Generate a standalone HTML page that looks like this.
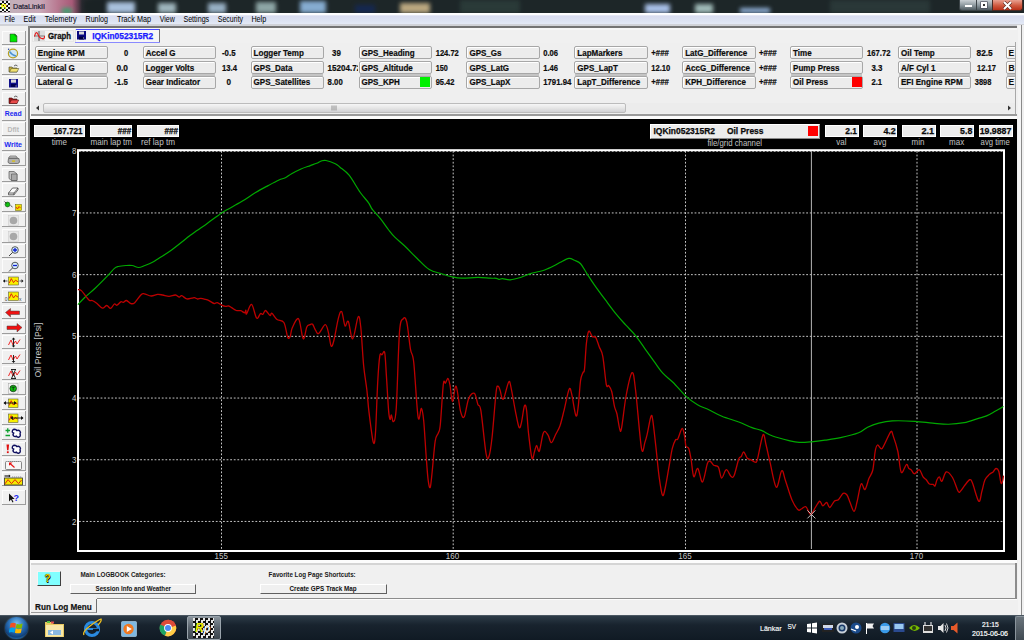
<!DOCTYPE html><html><head><meta charset="utf-8"><style>
html,body{margin:0;padding:0;}
body{width:1024px;height:640px;overflow:hidden;position:relative;background:#f0f0f0;font-family:"Liberation Sans",sans-serif;}
div{box-sizing:border-box;}
.t{position:absolute;white-space:nowrap;line-height:1;}
.cb{position:absolute;height:13px;width:73.4px;border:1px solid #a7a7a7;border-radius:2px;background:#ececec;box-shadow:inset 1px 1px 0 #fff;}
.cl{position:absolute;white-space:nowrap;line-height:1;font-weight:bold;font-size:8px;color:#1a1a1a;}
.v{position:absolute;white-space:nowrap;line-height:1;font-weight:bold;font-size:8px;color:#1a1a1a;}
.tb{position:absolute;left:2px;width:24px;height:15px;border-top:1px solid #fff;border-left:1px solid #fff;border-right:1px solid #a0a0a0;border-bottom:1px solid #a0a0a0;}
.hb{position:absolute;height:12px;background:#ececec;border:1px solid #fff;}
.hv{position:absolute;white-space:nowrap;line-height:1;font-weight:bold;font-size:8.4px;color:#111;text-align:right;}
.hl{position:absolute;white-space:nowrap;line-height:1;font-size:7.9px;color:#c8c8c8;text-align:center;}
.yl{position:absolute;white-space:nowrap;line-height:1;font-size:8.5px;color:#d0d0d0;}
</style></head><body>

<div style="position:absolute;left:0;top:0;width:1024px;height:13px;overflow:hidden;background:linear-gradient(90deg,#a8a0a8 0,#c4b0ba 12px,#c8a8b8 40px,#b87890 58px,#a85a78 72px,#2a2a30 82px,#1d2628 95px);">
<div style="position:absolute;left:62px;top:8px;width:10px;height:6px;background:#40a070;filter:blur(2px);"></div>
<div style="position:absolute;left:84px;top:0px;width:30px;height:13px;background:#1a2224;filter:blur(2px);"></div>
<div style="position:absolute;left:107px;top:2px;width:28px;height:11px;background:#a8c0dc;filter:blur(2px);"></div>
<div style="position:absolute;left:158px;top:3px;width:18px;height:10px;background:#9fb5bc;filter:blur(2px);"></div>
<div style="position:absolute;left:208px;top:3px;width:18px;height:10px;background:#98b0c4;filter:blur(2px);"></div>
<div style="position:absolute;left:256px;top:2px;width:20px;height:11px;background:#8ea6a6;filter:blur(2px);"></div>
<div style="position:absolute;left:300px;top:1px;width:26px;height:12px;background:#86acd0;filter:blur(2px);"></div>
<div style="position:absolute;left:355px;top:5px;width:20px;height:8px;background:#152850;filter:blur(2px);"></div>
<div style="position:absolute;left:400px;top:3px;width:30px;height:10px;background:#bba880;filter:blur(2px);"></div>
<div style="position:absolute;left:460px;top:0px;width:60px;height:13px;background:#2a3a38;filter:blur(2px);"></div>
<div style="position:absolute;left:645px;top:4px;width:25px;height:9px;background:#a8c0e8;filter:blur(2px);"></div>
<div style="position:absolute;left:695px;top:4px;width:18px;height:9px;background:#a0bab8;filter:blur(2px);"></div>
<div style="position:absolute;left:740px;top:8px;width:30px;height:5px;background:#90b0d8;filter:blur(2px);"></div>
<div style="position:absolute;left:830px;top:0px;width:100px;height:13px;background:#2a3838;filter:blur(2px);"></div>
</div>
<div style="position:absolute;left:0;top:1px;width:10px;height:11px;background:repeating-conic-gradient(#111 0 25%,#eee 0 50%) 0 0/4px 4px;"></div>
<div class="t" style="left:1px;top:2px;font:bold 8px 'Liberation Sans';color:#ff0;">R</div>

<div style="position:absolute;left:959px;top:0;width:34px;height:11px;background:linear-gradient(#c9d0d4,#8a969c 55%,#505c62);border:1px solid #3c4448;border-top:none;border-radius:0 0 0 3px;"></div>
<div style="position:absolute;left:976px;top:0;width:1px;height:11px;background:#3c4448;"></div>
<div style="position:absolute;left:965px;top:5px;width:7px;height:2px;background:#fff;"></div>
<div style="position:absolute;left:981px;top:2px;width:6px;height:6px;border:2px solid #fff;background:#333;box-shadow:0 0 0 0.6px #445;"></div>
<div style="position:absolute;left:992px;top:0;width:31px;height:11px;background:linear-gradient(#e8a090,#d05a40 55%,#b83018);border:1px solid #4a2a24;border-top:none;border-radius:0 0 3px 0;"></div>
<svg style="position:absolute;left:1002px;top:1px" width="11" height="9" viewBox="0 0 11 9"><path d="M2 1l7 7M9 1l-7 7" stroke="#5a2a20" stroke-width="3.2"/><path d="M2 1l7 7M9 1l-7 7" stroke="#fff" stroke-width="2"/></svg>
<div style="position:absolute;left:0;top:13px;width:1024px;height:13px;background:linear-gradient(#fdfdfe 0,#fdfdfe 1.5px,#d8dcef 3px,#dde3f2 8px,#e2e8f5 10.5px,#d0d2d8 11.5px,#d0d2d6 13px);"></div>
<div style="position:absolute;left:27.5px;top:26px;width:990px;height:2px;background:#737373;"></div>









<div style="position:absolute;left:1017px;top:25px;width:7px;height:590px;background:#f0f0f0;"></div>
<div style="position:absolute;left:1018px;top:26px;width:3px;height:589px;background:#f4f4f4;"></div>
<div style="position:absolute;left:1021px;top:25px;width:1px;height:590px;background:#8a8a8a;"></div>
<div style="position:absolute;left:0px;top:26px;width:27.5px;height:589px;background:#f0f0f0;"></div>
<div style="position:absolute;left:27.5px;top:26px;width:2px;height:589px;background:#858585;"></div>
<div style="position:absolute;left:2px;top:30.72px;width:24px;height:14px;border-right:1px solid #9c9c9c;border-bottom:1px solid #9c9c9c;box-shadow:inset 1px 1px 0 #fcfcfc;"></div>
<svg style="position:absolute;left:0;top:30.72px" width="28" height="15" viewBox="0 0 28 15"><path d="M10 3h5l2 2v6h-7z" fill="#00e600" stroke="#2a2a2a" stroke-width="0.5"/><path d="M15 3v2h2" fill="none" stroke="#2a2a2a" stroke-width="0.5"/></svg>
<div style="position:absolute;left:2px;top:45.94px;width:24px;height:14px;border-right:1px solid #9c9c9c;border-bottom:1px solid #9c9c9c;box-shadow:inset 1px 1px 0 #fcfcfc;"></div>
<svg style="position:absolute;left:0;top:45.94px" width="28" height="15" viewBox="0 0 28 15"><ellipse cx="13" cy="7.5" rx="4.6" ry="4.3" fill="#cfe6f5" stroke="#b8a020" stroke-width="1.2"/><path d="M9.5 5.5q3 4 6.5 4.5" stroke="#4a90d0" stroke-width="1.3" fill="none"/><circle cx="8.6" cy="3.3" r="0.7" fill="#2040a0"/></svg>
<div style="position:absolute;left:2px;top:61.16px;width:24px;height:14px;border-right:1px solid #9c9c9c;border-bottom:1px solid #9c9c9c;box-shadow:inset 1px 1px 0 #fcfcfc;"></div>
<svg style="position:absolute;left:0;top:61.16px" width="28" height="15" viewBox="0 0 28 15"><path d="M9 6h3l1 1h4v4h-8z" fill="#c8b040" stroke="#404020" stroke-width="0.6"/><path d="M9.5 11l1.8-3.5h7.5l-1.8 3.5z" fill="#f0e070" stroke="#404020" stroke-width="0.5"/><path d="M14 5q2-2 3.5 0" stroke="#222" stroke-width="0.7" fill="none"/></svg>
<div style="position:absolute;left:2px;top:76.38px;width:24px;height:14px;border-right:1px solid #9c9c9c;border-bottom:1px solid #9c9c9c;box-shadow:inset 1px 1px 0 #fcfcfc;"></div>
<svg style="position:absolute;left:0;top:76.38px" width="28" height="15" viewBox="0 0 28 15"><rect x="9" y="3" width="9" height="8.5" fill="#10108a"/><rect x="11" y="3.5" width="5" height="3.2" fill="#d8d8d8"/><rect x="11" y="8" width="5" height="3" fill="#000050"/><rect x="15.5" y="9.5" width="1" height="1" fill="#ccc"/></svg>
<div style="position:absolute;left:2px;top:91.60px;width:24px;height:14px;border-right:1px solid #9c9c9c;border-bottom:1px solid #9c9c9c;box-shadow:inset 1px 1px 0 #fcfcfc;"></div>
<svg style="position:absolute;left:0;top:91.60px" width="28" height="15" viewBox="0 0 28 15"><path d="M9 6h3l1 1h4v4.5h-8z" fill="#a01818" stroke="#401010" stroke-width="0.6"/><path d="M9.5 11.5l1.8-3.5h7.5l-1.8 3.5z" fill="#e84a4a" stroke="#401010" stroke-width="0.5"/><path d="M14 5q2-2 3.5 0" stroke="#222" stroke-width="0.7" fill="none"/></svg>
<div style="position:absolute;left:2px;top:106.82px;width:24px;height:14px;border-right:1px solid #9c9c9c;border-bottom:1px solid #9c9c9c;box-shadow:inset 1px 1px 0 #fcfcfc;"></div>
<svg style="position:absolute;left:0;top:106.82px" width="28" height="15" viewBox="0 0 28 15"><text x="13.2" y="9.2" text-anchor="middle" font-family="Liberation Sans" font-weight="bold" font-size="6.9" fill="#1a2af0">Read</text></svg>
<div style="position:absolute;left:2px;top:122.04px;width:24px;height:14px;border-right:1px solid #9c9c9c;border-bottom:1px solid #9c9c9c;box-shadow:inset 1px 1px 0 #fcfcfc;"></div>
<svg style="position:absolute;left:0;top:122.04px" width="28" height="15" viewBox="0 0 28 15"><text x="13.2" y="9.6" text-anchor="middle" font-family="Liberation Sans" font-weight="bold" font-size="6.9" fill="#b8b8b8">Dflt</text></svg>
<div style="position:absolute;left:2px;top:137.26px;width:24px;height:14px;border-right:1px solid #9c9c9c;border-bottom:1px solid #9c9c9c;box-shadow:inset 1px 1px 0 #fcfcfc;"></div>
<svg style="position:absolute;left:0;top:137.26px" width="28" height="15" viewBox="0 0 28 15"><text x="13.2" y="9.6" text-anchor="middle" font-family="Liberation Sans" font-weight="bold" font-size="7.2" fill="#1a2af0">Write</text></svg>
<div style="position:absolute;left:2px;top:152.48px;width:24px;height:14px;border-right:1px solid #9c9c9c;border-bottom:1px solid #9c9c9c;box-shadow:inset 1px 1px 0 #fcfcfc;"></div>
<svg style="position:absolute;left:0;top:152.48px" width="28" height="15" viewBox="0 0 28 15"><path d="M10 4h6l1.5 2h-9z" fill="#c8c8c8" stroke="#505050" stroke-width="0.6"/><path d="M8.5 6.5h10.5l0.5 3.5q-0.5 1.5-2 1.5h-7.5q-1.5 0-2-1.5z" fill="#b0b0b0" stroke="#404040" stroke-width="0.6"/><rect x="12" y="8.5" width="3" height="1.2" fill="#e0c000"/></svg>
<div style="position:absolute;left:2px;top:167.70px;width:24px;height:14px;border-right:1px solid #9c9c9c;border-bottom:1px solid #9c9c9c;box-shadow:inset 1px 1px 0 #fcfcfc;"></div>
<svg style="position:absolute;left:0;top:167.70px" width="28" height="15" viewBox="0 0 28 15"><path d="M9 3.5h5l3 2.5v6.5h-5.5l-2.5-2z" fill="#c0c0c0" stroke="#404040" stroke-width="0.6"/><path d="M11.5 6h5.5v6.5h-5.5z" fill="#a8a8a8" stroke="#404040" stroke-width="0.5"/></svg>
<div style="position:absolute;left:2px;top:182.92px;width:24px;height:14px;border-right:1px solid #9c9c9c;border-bottom:1px solid #9c9c9c;box-shadow:inset 1px 1px 0 #fcfcfc;"></div>
<svg style="position:absolute;left:0;top:182.92px" width="28" height="15" viewBox="0 0 28 15"><path d="M8.5 10l4-5h5.5l-4 5z" fill="#fafafa" stroke="#303030" stroke-width="0.7"/><path d="M8.5 10v1.8h5.5l4-5v-1.8M14 10v1.8" fill="none" stroke="#303030" stroke-width="0.7"/></svg>
<div style="position:absolute;left:2px;top:198.14px;width:24px;height:14px;border-right:1px solid #9c9c9c;border-bottom:1px solid #9c9c9c;box-shadow:inset 1px 1px 0 #fcfcfc;"></div>
<svg style="position:absolute;left:0;top:198.14px" width="28" height="15" viewBox="0 0 28 15"><circle cx="7.5" cy="6.5" r="2.4" fill="#10c010" stroke="#104010" stroke-width="0.6"/><path d="M4.5 3.5l2 2M10.5 7.5l2 1.5" stroke="#111" stroke-width="0.7"/><rect x="15.5" y="6.5" width="6" height="6" fill="#f0e000" stroke="#606000" stroke-width="0.5"/><path d="M16 9l1.5 2 1.5-2.5 1.5 1.5" stroke="#e01010" stroke-width="0.8" fill="none"/></svg>
<div style="position:absolute;left:2px;top:213.36px;width:24px;height:14px;border-right:1px solid #9c9c9c;border-bottom:1px solid #9c9c9c;box-shadow:inset 1px 1px 0 #fcfcfc;"></div>
<svg style="position:absolute;left:0;top:213.36px" width="28" height="15" viewBox="0 0 28 15"><rect x="8.5" y="2.5" width="10" height="10" fill="#e8e8e8" stroke="#c8c8c8" stroke-width="0.5"/><circle cx="13.5" cy="7.5" r="3.8" fill="#a8a8a8"/></svg>
<div style="position:absolute;left:2px;top:228.58px;width:24px;height:14px;border-right:1px solid #9c9c9c;border-bottom:1px solid #9c9c9c;box-shadow:inset 1px 1px 0 #fcfcfc;"></div>
<svg style="position:absolute;left:0;top:228.58px" width="28" height="15" viewBox="0 0 28 15"><rect x="8.5" y="2.5" width="10" height="10" fill="#e8e8e8" stroke="#c8c8c8" stroke-width="0.5"/><circle cx="13.5" cy="7.5" r="3.8" fill="#a8a8a8"/></svg>
<div style="position:absolute;left:2px;top:243.80px;width:24px;height:14px;border-right:1px solid #9c9c9c;border-bottom:1px solid #9c9c9c;box-shadow:inset 1px 1px 0 #fcfcfc;"></div>
<svg style="position:absolute;left:0;top:243.80px" width="28" height="15" viewBox="0 0 28 15"><circle cx="15" cy="6" r="3.3" fill="#d8f0ff" stroke="#303030" stroke-width="0.8"/><path d="M13 6h4M15 4v4" stroke="#1020d0" stroke-width="1.3"/><path d="M12.5 8.5l-3.5 3.5" stroke="#303030" stroke-width="0.9"/></svg>
<div style="position:absolute;left:2px;top:259.02px;width:24px;height:14px;border-right:1px solid #9c9c9c;border-bottom:1px solid #9c9c9c;box-shadow:inset 1px 1px 0 #fcfcfc;"></div>
<svg style="position:absolute;left:0;top:259.02px" width="28" height="15" viewBox="0 0 28 15"><circle cx="15" cy="6.5" r="3.3" fill="#d8f0ff" stroke="#303030" stroke-width="0.8"/><path d="M13 6.5h4" stroke="#1020d0" stroke-width="1.3"/><path d="M12.5 9l-3.5 3.5" stroke="#303030" stroke-width="0.9"/></svg>
<div style="position:absolute;left:2px;top:274.24px;width:24px;height:14px;border-right:1px solid #9c9c9c;border-bottom:1px solid #9c9c9c;box-shadow:inset 1px 1px 0 #fcfcfc;"></div>
<svg style="position:absolute;left:0;top:274.24px" width="28" height="15" viewBox="0 0 28 15"><rect x="8.5" y="3" width="10" height="8" fill="#f8f000" stroke="#606040" stroke-width="0.6"/><path d="M9.3 9.0l2.0 -4.4 2.2 4.0 2.0 -2.4 2.5 1.6" stroke="#e01010" stroke-width="0.9" fill="none"/><path d="M3.5 7h4M21.5 7h-2" stroke="#111" stroke-width="0.7"/><path d="M3 7l2-1.7v3.4zM23.5 7l-2-1.7v3.4z" fill="#111"/></svg>
<div style="position:absolute;left:2px;top:289.46px;width:24px;height:14px;border-right:1px solid #9c9c9c;border-bottom:1px solid #9c9c9c;box-shadow:inset 1px 1px 0 #fcfcfc;"></div>
<svg style="position:absolute;left:0;top:289.46px" width="28" height="15" viewBox="0 0 28 15"><rect x="8.5" y="3" width="10" height="8.5" fill="#f8f000" stroke="#606040" stroke-width="0.6"/><path d="M9.3 9.375l2.0 -4.675000000000001 2.2 4.25 2.0 -2.55 2.5 1.7000000000000002" stroke="#e01010" stroke-width="0.9" fill="none"/><text x="4.8" y="12.3" font-family="Liberation Sans" font-size="5" fill="#444">0</text><text x="19" y="12.3" font-family="Liberation Sans" font-size="5" fill="#444">x</text></svg>
<div style="position:absolute;left:2px;top:304.68px;width:24px;height:14px;border-right:1px solid #9c9c9c;border-bottom:1px solid #9c9c9c;box-shadow:inset 1px 1px 0 #fcfcfc;"></div>
<svg style="position:absolute;left:0;top:304.68px" width="28" height="15" viewBox="0 0 28 15"><path d="M5.5 7.5l5-4v2.5h9v3.5h-9v2.5z" fill="#ee1010" stroke="#404040" stroke-width="0.5"/></svg>
<div style="position:absolute;left:2px;top:319.90px;width:24px;height:14px;border-right:1px solid #9c9c9c;border-bottom:1px solid #9c9c9c;box-shadow:inset 1px 1px 0 #fcfcfc;"></div>
<svg style="position:absolute;left:0;top:319.90px" width="28" height="15" viewBox="0 0 28 15"><path d="M22 7.5l-5-4v2.5h-10v3.5h10v2.5z" fill="#ee1010" stroke="#404040" stroke-width="0.5"/></svg>
<div style="position:absolute;left:2px;top:335.12px;width:24px;height:14px;border-right:1px solid #9c9c9c;border-bottom:1px solid #9c9c9c;box-shadow:inset 1px 1px 0 #fcfcfc;"></div>
<svg style="position:absolute;left:0;top:335.12px" width="28" height="15" viewBox="0 0 28 15"><path d="M8.5 10l2.5-5 2 5 2.5-4 1.5 3 3-4.5" stroke="#ee1010" stroke-width="0.9" fill="none"/><path d="M13.5 3.5v8" stroke="#111" stroke-width="0.9"/><path d="M13.5 2.5l-1.8 2h3.6zM13.5 12.5l-1.8-2h3.6z" fill="#111"/></svg>
<div style="position:absolute;left:2px;top:350.34px;width:24px;height:14px;border-right:1px solid #9c9c9c;border-bottom:1px solid #9c9c9c;box-shadow:inset 1px 1px 0 #fcfcfc;"></div>
<svg style="position:absolute;left:0;top:350.34px" width="28" height="15" viewBox="0 0 28 15"><path d="M8.5 10l2.5-5 2 5 2.5-4 1.5 3 3-4.5" stroke="#ee1010" stroke-width="0.9" fill="none"/><path d="M13.5 5v7" stroke="#111" stroke-width="0.9"/><path d="M13.5 13l-1.8-2h3.6z" fill="#111"/></svg>
<div style="position:absolute;left:2px;top:365.56px;width:24px;height:14px;border-right:1px solid #9c9c9c;border-bottom:1px solid #9c9c9c;box-shadow:inset 1px 1px 0 #fcfcfc;"></div>
<svg style="position:absolute;left:0;top:365.56px" width="28" height="15" viewBox="0 0 28 15"><path d="M8.5 10l2.5-5 2 5 2.5-4 1.5 3 3-4.5" stroke="#ee1010" stroke-width="0.9" fill="none"/><path d="M11.5 3.5l4 9M15.5 3.5l-4 9M11 3.5h5M11 12.5h5" stroke="#111" stroke-width="0.9"/></svg>
<div style="position:absolute;left:2px;top:380.78px;width:24px;height:14px;border-right:1px solid #9c9c9c;border-bottom:1px solid #9c9c9c;box-shadow:inset 1px 1px 0 #fcfcfc;"></div>
<svg style="position:absolute;left:0;top:380.78px" width="28" height="15" viewBox="0 0 28 15"><rect x="8.5" y="2.5" width="9.5" height="10" fill="#f4f4f4" stroke="#a0a0a0" stroke-width="0.5"/><circle cx="13.2" cy="7.5" r="3.3" fill="#10c010" stroke="#102010" stroke-width="0.7"/><path d="M11.6 6.2h3.2M13.2 6.2v3.2" stroke="#102010" stroke-width="0.8"/></svg>
<div style="position:absolute;left:2px;top:396.00px;width:24px;height:14px;border-right:1px solid #9c9c9c;border-bottom:1px solid #9c9c9c;box-shadow:inset 1px 1px 0 #fcfcfc;"></div>
<svg style="position:absolute;left:0;top:396.00px" width="28" height="15" viewBox="0 0 28 15"><rect x="8.5" y="3" width="9.5" height="8.5" fill="#f8f000" stroke="#606040" stroke-width="0.6"/><path d="M9.3 9.375l1.9000000000000001 -4.675000000000001 2.09 4.25 1.9000000000000001 -2.55 2.375 1.7000000000000002" stroke="#e01010" stroke-width="0.9" fill="none"/><path d="M4 7h12" stroke="#111" stroke-width="0.9"/><path d="M3.5 7l2.5-2v4zM16.5 7l-2.5-2v4z" fill="#111"/></svg>
<div style="position:absolute;left:2px;top:411.22px;width:24px;height:14px;border-right:1px solid #9c9c9c;border-bottom:1px solid #9c9c9c;box-shadow:inset 1px 1px 0 #fcfcfc;"></div>
<svg style="position:absolute;left:0;top:411.22px" width="28" height="15" viewBox="0 0 28 15"><rect x="8.5" y="3" width="9.5" height="8.5" fill="#f8f000" stroke="#606040" stroke-width="0.6"/><path d="M9.3 9.375l1.9000000000000001 -4.675000000000001 2.09 4.25 1.9000000000000001 -2.55 2.375 1.7000000000000002" stroke="#e01010" stroke-width="0.9" fill="none"/><path d="M11 7h12" stroke="#111" stroke-width="0.9"/><path d="M10.5 7l2.5-2v4zM23.5 7l-2.5-2v4z" fill="#111"/></svg>
<div style="position:absolute;left:2px;top:426.44px;width:24px;height:14px;border-right:1px solid #9c9c9c;border-bottom:1px solid #9c9c9c;box-shadow:inset 1px 1px 0 #fcfcfc;"></div>
<svg style="position:absolute;left:0;top:426.44px" width="28" height="15" viewBox="0 0 28 15"><path d="M12.3 6.2q-0.3-2.8 2.3-2.9q1.6 0 2.2 1.3q1.6-1 3 0.3q1.3 1.3 0.2 3q1 2.2-1 3.1q-1.7 0.6-2.6-0.9q-1.5 0.9-2.7-0.2q-1.4-1.5 0.1-2.9q-0.9 0-1.5-0.8z" fill="#fff" stroke="#101060" stroke-width="1.4" stroke-linejoin="round"/><path d="M5.5 4.5h4.5M7.75 2.3v4.4M5.5 9.5h4.5" stroke="#10a030" stroke-width="1.3"/></svg>
<div style="position:absolute;left:2px;top:441.66px;width:24px;height:14px;border-right:1px solid #9c9c9c;border-bottom:1px solid #9c9c9c;box-shadow:inset 1px 1px 0 #fcfcfc;"></div>
<svg style="position:absolute;left:0;top:441.66px" width="28" height="15" viewBox="0 0 28 15"><path d="M12.3 6.2q-0.3-2.8 2.3-2.9q1.6 0 2.2 1.3q1.6-1 3 0.3q1.3 1.3 0.2 3q1 2.2-1 3.1q-1.7 0.6-2.6-0.9q-1.5 0.9-2.7-0.2q-1.4-1.5 0.1-2.9q-0.9 0-1.5-0.8z" fill="#fff" stroke="#101060" stroke-width="1.4" stroke-linejoin="round"/><path d="M6.5 2.5h2.6l-0.6 5.8h-1.4z" fill="#e01010"/><rect x="6.9" y="9.3" width="1.8" height="1.8" fill="#e01010"/></svg>
<div style="position:absolute;left:2px;top:456.88px;width:24px;height:14px;border-right:1px solid #9c9c9c;border-bottom:1px solid #9c9c9c;box-shadow:inset 1px 1px 0 #fcfcfc;"></div>
<svg style="position:absolute;left:0;top:456.88px" width="28" height="15" viewBox="0 0 28 15"><rect x="5.5" y="4.5" width="16" height="8" rx="1" fill="#f6f6f6" stroke="#6a6a6a" stroke-width="0.8"/><path d="M7 4.5h13" stroke="#b0b0b0" stroke-width="1" stroke-dasharray="1 1"/><path d="M14.5 10.5l-4.5-4" stroke="#e81010" stroke-width="1.2"/><path d="M9 5.5h3.5l-3.5 3.3z" fill="#e81010"/></svg>
<div style="position:absolute;left:2px;top:472.10px;width:24px;height:14px;border-right:1px solid #9c9c9c;border-bottom:1px solid #9c9c9c;box-shadow:inset 1px 1px 0 #fcfcfc;"></div>
<svg style="position:absolute;left:0;top:472.10px" width="28" height="15" viewBox="0 0 28 15"><rect x="4.5" y="6" width="18" height="7" fill="#f4e800" stroke="#303030" stroke-width="0.8"/><path d="M5 11.8l3-4.2 3.5 4 3.5-4 3.5 4 3-3.5" stroke="#e01010" stroke-width="0.9" fill="none"/><path d="M4.5 4h5" stroke="#111" stroke-width="1.1"/><path d="M10.5 4l-1.6-1.4v2.8z" fill="#111"/><path d="M12 5h10" stroke="#777" stroke-width="0.8" stroke-dasharray="1.2 0.8"/></svg>
<div style="position:absolute;left:2px;top:490.4px;width:24px;height:15px;border-right:1px solid #9c9c9c;border-bottom:1px solid #9c9c9c;box-shadow:inset 1px 1px 0 #fcfcfc;"></div>
<svg style="position:absolute;left:0;top:490.4px" width="28" height="15" viewBox="0 0 28 15"><path d="M9 3.5v8l2-2 1.5 3 1-0.5-1.5-3h2.7z" fill="#111"/><text x="13.5" y="10.5" font-family="Liberation Sans" font-weight="bold" font-size="9" fill="#1a2af0">?</text></svg>
<div style="position:absolute;left:29.5px;top:28px;width:987.5px;height:88px;background:#f0f0f0;"></div>
<div style="position:absolute;left:29.5px;top:28px;width:987.5px;height:2px;background:#f6f6f6;"></div>
<div style="position:absolute;left:29.5px;top:28px;width:1px;height:88px;background:#fafafa;"></div>
<div style="position:absolute;left:32.4px;top:30px;width:42px;height:11.6px;background:#f3f3f3;border:1px solid #e6e6e6;"></div>
<svg style="position:absolute;left:34px;top:31px" width="11" height="10" viewBox="0 0 11 10"><rect x="0" y="0" width="11" height="10" fill="#dcdcdc"/><rect x="4" y="0" width="2" height="10" fill="#9a9a9a"/><rect x="0" y="4.5" width="11" height="1" fill="#7a7a7a"/><path d="M0.5 5.5Q2 -1 4 3.5T8.5 7.5Q10 9 10.7 5" stroke="#e81818" stroke-width="1.1" fill="none"/></svg>

<div style="position:absolute;left:74.5px;top:29px;width:85px;height:14px;background:#f6f6f6;border-left:1px solid #e0e0e0;border-right:1px solid #707070;"></div>
<div style="position:absolute;left:75.5px;top:29.2px;width:83px;height:1px;background:#4a4aff;"></div>
<div style="position:absolute;left:74.5px;top:42px;width:85px;height:1.5px;background:#8a8aff;"></div>
<svg style="position:absolute;left:77px;top:30.5px" width="9" height="9" viewBox="0 0 9 9"><rect x="0" y="0" width="9" height="8.5" fill="#0a0a80"/><rect x="2" y="0.5" width="5" height="3" fill="#d8d8d8"/><rect x="2" y="5.5" width="5" height="3" fill="#000040"/><rect x="6" y="6.5" width="1" height="1" fill="#bbb"/></svg>

<div style="position:absolute;left:31px;top:43px;width:985px;height:71px;background:#efefef;"></div>
<div style="position:absolute;left:1015px;top:42px;width:1px;height:72px;background:#a8a8a8;"></div>
<div style="position:absolute;left:31px;top:43px;width:984px;height:60px;overflow:hidden;">
<div class="cb" style="left:3.80px;top:3.30px;"></div>
<div class="cb" style="left:3.80px;top:18.20px;"></div>
<div style="position:absolute;left:4.80px;top:30.70px;width:71.4px;height:2px;background:#c4c4c4;"></div>
<div class="cb" style="left:3.80px;top:33.20px;"></div>
<div class="cb" style="left:111.70px;top:3.30px;"></div>
<div class="cb" style="left:111.70px;top:18.20px;"></div>
<div style="position:absolute;left:112.70px;top:30.70px;width:71.4px;height:2px;background:#c4c4c4;"></div>
<div class="cb" style="left:111.70px;top:33.20px;"></div>
<div class="cb" style="left:219.60px;top:3.30px;"></div>
<div class="cb" style="left:219.60px;top:18.20px;"></div>
<div style="position:absolute;left:220.60px;top:30.70px;width:71.4px;height:2px;background:#c4c4c4;"></div>
<div class="cb" style="left:219.60px;top:33.20px;"></div>
<div class="cb" style="left:327.50px;top:3.30px;"></div>
<div class="cb" style="left:327.50px;top:18.20px;"></div>
<div style="position:absolute;left:328.50px;top:30.70px;width:71.4px;height:2px;background:#c4c4c4;"></div>
<div class="cb" style="left:327.50px;top:33.20px;"></div>
<div class="cb" style="left:435.40px;top:3.30px;"></div>
<div class="cb" style="left:435.40px;top:18.20px;"></div>
<div style="position:absolute;left:436.40px;top:30.70px;width:71.4px;height:2px;background:#c4c4c4;"></div>
<div class="cb" style="left:435.40px;top:33.20px;"></div>
<div class="cb" style="left:543.30px;top:3.30px;"></div>
<div class="cb" style="left:543.30px;top:18.20px;"></div>
<div style="position:absolute;left:544.30px;top:30.70px;width:71.4px;height:2px;background:#c4c4c4;"></div>
<div class="cb" style="left:543.30px;top:33.20px;"></div>
<div class="cb" style="left:651.20px;top:3.30px;"></div>
<div class="cb" style="left:651.20px;top:18.20px;"></div>
<div style="position:absolute;left:652.20px;top:30.70px;width:71.4px;height:2px;background:#c4c4c4;"></div>
<div class="cb" style="left:651.20px;top:33.20px;"></div>
<div class="cb" style="left:759.10px;top:3.30px;"></div>
<div class="cb" style="left:759.10px;top:18.20px;"></div>
<div style="position:absolute;left:760.10px;top:30.70px;width:71.4px;height:2px;background:#c4c4c4;"></div>
<div class="cb" style="left:759.10px;top:33.20px;"></div>
<div class="cb" style="left:867.00px;top:3.30px;"></div>
<div class="cb" style="left:867.00px;top:18.20px;"></div>
<div style="position:absolute;left:868.00px;top:30.70px;width:71.4px;height:2px;background:#c4c4c4;"></div>
<div class="cb" style="left:867.00px;top:33.20px;"></div>
<div class="cb" style="left:974.90px;top:3.30px;"></div>
<div class="cb" style="left:974.90px;top:18.20px;"></div>
<div style="position:absolute;left:975.90px;top:30.70px;width:71.4px;height:2px;background:#c4c4c4;"></div>
<div class="cb" style="left:974.90px;top:33.20px;"></div>
<div style="position:absolute;left:389.3px;top:34px;width:10.2px;height:10.2px;background:#00f000;"></div>
<div style="position:absolute;left:821px;top:34px;width:10.2px;height:10.2px;background:#ff0000;"></div>
</div>






















































<div style="position:absolute;left:1005px;top:43px;width:10px;height:60px;overflow:hidden;">
<div class="t" style="left:3.5px;top:5.90px;font-size:8.5px;font-weight:bold;color:#0c0c0c;">E</div>
<div class="t" style="left:3.5px;top:20.50px;font-size:8.5px;font-weight:bold;color:#0c0c0c;">B</div>
<div class="t" style="left:3.5px;top:35.10px;font-size:8.5px;font-weight:bold;color:#0c0c0c;">E</div>
</div>
<div style="position:absolute;left:31px;top:103px;width:984px;height:10px;background:#ececec;"></div>
<svg style="position:absolute;left:35px;top:105px" width="5" height="6" viewBox="0 0 5 6"><path d="M4 0.5L1 3l3 2.5z" fill="#333"/></svg>
<svg style="position:absolute;left:1007px;top:105px" width="5" height="6" viewBox="0 0 5 6"><path d="M1 0.5L4 3l-3 2.5z" fill="#333"/></svg>
<div style="position:absolute;left:43px;top:103.3px;width:582.5px;height:9.3px;background:linear-gradient(#f6f6f6,#e6e6e6 50%,#d0d0d4);border:1px solid #bcbcbc;border-radius:2px;"></div>
<svg style="position:absolute;left:331px;top:105px" width="6" height="6" viewBox="0 0 6 6"><path d="M1 0.5v5M3 0.5v5M5 0.5v5" stroke="#8a8a8a" stroke-width="0.9"/></svg>
<div style="position:absolute;left:31px;top:114px;width:986px;height:1.5px;background:#9a9a9a;"></div>
<div style="position:absolute;left:30px;top:116px;width:987px;height:3px;background:#fbfbfb;"></div>
<div style="position:absolute;left:30px;top:119px;width:987px;height:441px;background:#000;"></div>
<div class="hb" style="left:34.00px;top:125px;width:51.00px;"></div>
<div class="hb" style="left:89.70px;top:125px;width:42.70px;"></div>
<div class="hb" style="left:136.60px;top:125px;width:42.70px;"></div>






<div style="position:absolute;left:649.8px;top:124px;width:170.5px;height:14.6px;background:#ececec;border-top:1px solid #fff;border-left:1px solid #fff;border-right:1.5px solid #8a8a8a;border-bottom:1.5px solid #8a8a8a;"></div>


<div style="position:absolute;left:808px;top:125.8px;width:10px;height:10.7px;background:#ff0000;"></div>

<div class="hb" style="left:824.80px;top:125px;width:34.00px;"></div>


<div class="hb" style="left:863.25px;top:125px;width:34.00px;"></div>


<div class="hb" style="left:901.70px;top:125px;width:34.00px;"></div>


<div class="hb" style="left:940.15px;top:125px;width:34.00px;"></div>


<div class="hb" style="left:978.60px;top:125px;width:34.00px;"></div>


<svg style="position:absolute;left:0;top:0" width="1024" height="640" viewBox="0 0 1024 640">
<line x1="79" y1="151.25" x2="1003" y2="151.25" stroke="#c4c4c4" stroke-width="1" stroke-dasharray="1.8 1.8"/>
<line x1="79" y1="212.95" x2="1003" y2="212.95" stroke="#c4c4c4" stroke-width="1" stroke-dasharray="1.8 1.8"/>
<line x1="79" y1="274.65" x2="1003" y2="274.65" stroke="#c4c4c4" stroke-width="1" stroke-dasharray="1.8 1.8"/>
<line x1="79" y1="336.35" x2="1003" y2="336.35" stroke="#c4c4c4" stroke-width="1" stroke-dasharray="1.8 1.8"/>
<line x1="79" y1="398.05" x2="1003" y2="398.05" stroke="#c4c4c4" stroke-width="1" stroke-dasharray="1.8 1.8"/>
<line x1="79" y1="459.75" x2="1003" y2="459.75" stroke="#c4c4c4" stroke-width="1" stroke-dasharray="1.8 1.8"/>
<line x1="79" y1="521.45" x2="1003" y2="521.45" stroke="#c4c4c4" stroke-width="1" stroke-dasharray="1.8 1.8"/>
<line x1="221.5" y1="151" x2="221.5" y2="549" stroke="#c4c4c4" stroke-width="1" stroke-dasharray="1.8 1.8"/>
<line x1="453.2" y1="151" x2="453.2" y2="549" stroke="#c4c4c4" stroke-width="1" stroke-dasharray="1.8 1.8"/>
<line x1="685.5" y1="151" x2="685.5" y2="549" stroke="#c4c4c4" stroke-width="1" stroke-dasharray="1.8 1.8"/>
<line x1="917" y1="151" x2="917" y2="549" stroke="#c4c4c4" stroke-width="1" stroke-dasharray="1.8 1.8"/>
<rect x="78" y="150.2" width="926" height="400.8" fill="none" stroke="#fff" stroke-width="2"/>
<line x1="811.4" y1="151" x2="811.4" y2="549" stroke="#b4b4b4" stroke-width="1"/>
<path d="M77.90 304.60 C79.12 303.33 82.28 299.77 85.20 297.00 C88.12 294.23 91.60 291.60 95.40 288.00 C99.20 284.40 104.83 278.67 108.00 275.40 C111.17 272.13 112.70 269.88 114.40 268.40 C116.10 266.92 116.28 266.98 118.20 266.50 C120.12 266.02 123.57 265.67 125.90 265.50 C128.23 265.33 130.08 265.17 132.20 265.50 C134.32 265.83 136.48 267.50 138.60 267.50 C140.72 267.50 142.58 266.37 144.90 265.50 C147.22 264.63 150.17 263.50 152.50 262.30 C154.83 261.10 155.72 260.35 158.90 258.30 C162.08 256.25 166.42 253.78 171.60 250.00 C176.78 246.22 185.77 238.85 190.00 235.60 C194.23 232.35 194.13 232.53 197.00 230.50 C199.87 228.47 203.16 226.27 207.20 223.40 C211.24 220.53 217.87 215.63 221.25 213.30 C224.63 210.97 224.11 211.35 227.50 209.40 C230.89 207.45 236.92 204.42 241.60 201.60 C246.28 198.78 251.18 195.17 255.60 192.50 C260.02 189.83 264.20 187.68 268.10 185.60 C272.00 183.52 276.13 181.30 279.00 180.00 C281.87 178.70 283.20 178.84 285.30 177.80 C287.40 176.76 288.98 175.22 291.60 173.75 C294.22 172.28 297.88 170.36 301.00 169.00 C304.12 167.64 307.70 166.55 310.30 165.60 C312.90 164.65 314.78 164.07 316.60 163.30 C318.43 162.53 319.68 161.47 321.25 161.00 C322.82 160.53 323.66 160.04 326.00 160.50 C328.34 160.96 332.97 162.63 335.30 163.75 C337.63 164.87 337.70 165.29 340.00 167.20 C342.30 169.11 345.72 170.98 349.10 175.20 C352.48 179.42 357.08 187.93 360.30 192.50 C363.52 197.07 366.37 199.73 368.40 202.60 C370.43 205.47 370.47 206.98 372.50 209.70 C374.53 212.42 377.90 215.52 380.60 218.90 C383.30 222.28 386.33 226.95 388.70 230.00 C391.07 233.05 392.08 234.48 394.80 237.20 C397.52 239.92 401.27 242.75 405.00 246.30 C408.73 249.85 413.15 254.62 417.20 258.50 C421.25 262.38 425.25 267.07 429.30 269.60 C433.35 272.13 437.77 272.51 441.50 273.70 C445.23 274.89 448.32 276.00 451.70 276.75 C455.08 277.50 457.42 278.09 461.80 278.20 C466.18 278.31 473.26 277.40 478.00 277.40 C482.74 277.40 487.21 278.05 490.25 278.20 C493.29 278.35 494.73 278.10 496.25 278.30 C497.77 278.50 498.36 279.35 499.40 279.40 C500.44 279.45 500.68 278.53 502.50 278.60 C504.32 278.67 507.18 280.03 510.30 279.80 C513.42 279.57 517.87 278.23 521.25 277.20 C524.63 276.17 527.99 274.47 530.60 273.60 C533.21 272.73 534.55 272.60 536.90 272.00 C539.25 271.40 541.85 271.03 544.70 270.00 C547.55 268.97 551.40 267.08 554.00 265.80 C556.60 264.52 557.82 263.53 560.30 262.30 C562.78 261.07 566.55 258.73 568.90 258.40 C571.25 258.07 572.45 259.41 574.40 260.30 C576.35 261.19 578.52 261.53 580.60 263.75 C582.68 265.97 584.55 270.01 586.90 273.60 C589.25 277.19 591.58 280.87 594.70 285.30 C597.82 289.73 601.95 295.30 605.60 300.20 C609.25 305.10 613.22 310.53 616.60 314.70 C619.98 318.87 622.73 321.72 625.90 325.20 C629.07 328.68 632.42 331.67 635.60 335.60 C638.78 339.53 641.87 344.42 645.00 348.80 C648.13 353.18 651.43 357.83 654.40 361.90 C657.37 365.97 659.67 369.77 662.80 373.20 C665.93 376.63 669.28 378.60 673.20 382.50 C677.12 386.40 682.25 392.90 686.30 396.60 C690.35 400.30 693.75 402.52 697.50 404.70 C701.25 406.88 704.73 407.77 708.80 409.70 C712.87 411.63 716.90 414.25 721.90 416.30 C726.90 418.35 733.78 420.12 738.80 422.00 C743.82 423.88 748.25 426.20 752.00 427.60 C755.75 429.00 757.87 429.00 761.30 430.40 C764.73 431.80 767.98 434.30 772.60 436.00 C777.22 437.70 784.58 439.53 789.00 440.60 C793.42 441.67 795.37 442.20 799.10 442.40 C802.83 442.60 807.08 442.17 811.40 441.80 C815.72 441.43 820.13 440.88 825.00 440.20 C829.87 439.52 835.00 438.93 840.60 437.70 C846.20 436.47 854.10 434.55 858.60 432.80 C863.10 431.05 864.23 428.82 867.60 427.20 C870.97 425.58 874.68 424.15 878.80 423.10 C882.92 422.05 886.30 421.20 892.30 420.90 C898.30 420.60 908.07 420.93 914.80 421.30 C921.53 421.67 927.08 422.61 932.70 423.10 C938.32 423.59 943.25 424.32 948.50 424.25 C953.75 424.18 959.33 423.64 964.20 422.70 C969.07 421.76 973.97 419.73 977.70 418.60 C981.43 417.47 983.62 417.17 986.60 415.90 C989.58 414.63 992.78 412.57 995.60 411.00 C998.42 409.43 1002.18 407.25 1003.50 406.50" fill="none" stroke="#00a800" stroke-width="1.2" stroke-linejoin="round"/>
<path d="M77.90 289.60 C78.48 289.77 79.55 288.87 81.40 290.60 C83.25 292.33 87.20 298.35 89.00 300.00 C90.80 301.65 90.92 299.95 92.20 300.50 C93.48 301.05 95.00 302.03 96.70 303.30 C98.40 304.57 100.72 307.73 102.40 308.10 C104.08 308.47 105.43 305.45 106.80 305.50 C108.17 305.55 109.33 308.65 110.60 308.40 C111.87 308.15 113.33 304.53 114.40 304.00 C115.47 303.47 115.93 305.57 117.00 305.20 C118.07 304.83 119.75 302.28 120.80 301.80 C121.85 301.32 122.35 302.52 123.30 302.30 C124.25 302.08 125.23 300.28 126.50 300.50 C127.77 300.72 129.53 303.23 130.90 303.60 C132.27 303.97 133.00 304.18 134.70 302.70 C136.40 301.22 139.50 296.18 141.10 294.70 C142.70 293.22 142.62 293.58 144.30 293.80 C145.98 294.02 148.98 295.90 151.20 296.00 C153.42 296.10 155.68 294.57 157.60 294.40 C159.52 294.23 160.80 294.68 162.70 295.00 C164.60 295.32 166.88 296.30 169.00 296.30 C171.12 296.30 173.70 294.85 175.40 295.00 C177.10 295.15 178.15 297.08 179.20 297.20 C180.25 297.32 180.43 295.42 181.70 295.70 C182.97 295.98 185.10 298.48 186.80 298.90 C188.50 299.32 190.63 298.42 191.90 298.20 C193.17 297.98 193.45 297.47 194.40 297.60 C195.35 297.73 196.53 298.87 197.60 299.00 C198.67 299.13 199.53 298.35 200.80 298.40 C202.07 298.45 203.83 298.93 205.20 299.30 C206.57 299.67 207.52 299.90 209.00 300.60 C210.48 301.30 212.72 303.17 214.10 303.50 C215.48 303.83 216.03 302.33 217.30 302.60 C218.57 302.87 220.33 304.47 221.70 305.10 C223.07 305.73 224.33 306.25 225.50 306.40 C226.67 306.55 227.63 305.75 228.70 306.00 C229.77 306.25 230.63 307.15 231.90 307.90 C233.17 308.65 234.82 310.03 236.30 310.50 C237.78 310.97 239.42 310.32 240.80 310.70 C242.18 311.07 243.75 312.83 244.60 312.75 C245.45 312.67 245.58 309.99 245.90 310.20 C246.22 310.41 245.55 314.97 246.50 314.00 C247.45 313.03 249.92 303.72 251.60 304.40 C253.28 305.08 255.12 316.57 256.60 318.10 C258.08 319.63 259.43 314.23 260.50 313.60 C261.57 312.97 262.17 314.82 263.00 314.30 C263.83 313.78 264.33 310.30 265.50 310.50 C266.67 310.70 268.93 315.03 270.00 315.50 C271.07 315.97 270.73 312.65 271.90 313.30 C273.07 313.95 275.00 317.87 277.00 319.40 C279.00 320.93 282.11 319.50 283.90 322.50 C285.69 325.50 286.68 335.13 287.75 337.40 C288.82 339.67 289.56 337.67 290.30 336.10 C291.04 334.53 290.83 330.90 292.20 328.00 C293.57 325.10 296.80 317.28 298.50 318.70 C300.20 320.12 301.44 333.32 302.40 336.50 C303.36 339.68 303.52 339.38 304.25 337.80 C304.98 336.22 305.84 329.18 306.80 327.00 C307.76 324.82 309.03 325.16 310.00 324.70 C310.97 324.24 311.68 323.33 312.60 324.25 C313.52 325.17 314.48 328.68 315.50 330.20 C316.52 331.72 317.12 334.32 318.75 333.40 C320.38 332.48 323.66 324.70 325.30 324.70 C326.94 324.70 327.62 329.83 328.60 333.40 C329.58 336.97 330.30 345.00 331.20 346.10 C332.10 347.20 332.80 344.67 334.00 340.00 C335.20 335.33 337.12 322.83 338.40 318.10 C339.68 313.37 340.60 310.32 341.70 311.60 C342.80 312.88 343.90 324.17 345.00 325.80 C346.10 327.43 347.02 319.22 348.30 321.40 C349.58 323.58 351.07 339.63 352.70 338.90 C354.33 338.17 356.76 319.00 358.10 317.00 C359.44 315.00 359.83 318.87 360.75 326.90 C361.67 334.93 362.58 354.63 363.60 365.20 C364.62 375.77 366.00 382.47 366.90 390.30 C367.80 398.13 367.93 403.52 369.00 412.20 C370.07 420.88 372.22 439.02 373.30 442.40 C374.38 445.78 374.77 442.53 375.50 432.50 C376.23 422.47 376.98 394.97 377.70 382.20 C378.42 369.43 379.08 360.47 379.80 355.90 C380.52 351.33 381.18 355.33 382.00 354.80 C382.82 354.27 383.97 349.23 384.70 352.70 C385.43 356.17 385.75 365.95 386.40 375.60 C387.05 385.25 387.98 403.30 388.60 410.60 C389.22 417.90 389.63 418.67 390.10 419.40 C390.57 420.13 390.85 414.63 391.40 415.00 C391.95 415.37 392.59 422.70 393.40 421.60 C394.21 420.50 395.23 423.35 396.25 408.40 C397.27 393.45 398.33 346.84 399.50 331.90 C400.67 316.96 402.04 320.40 403.25 318.75 C404.46 317.10 405.54 316.89 406.75 322.00 C407.96 327.11 409.33 342.65 410.50 349.40 C411.67 356.15 412.48 351.20 413.75 362.50 C415.02 373.80 416.83 409.55 418.10 417.20 C419.38 424.85 420.47 407.80 421.40 408.40 C422.33 409.00 422.92 412.98 423.70 420.80 C424.48 428.62 425.37 445.50 426.10 455.30 C426.83 465.10 427.42 474.25 428.10 479.60 C428.78 484.95 429.52 488.75 430.20 487.40 C430.88 486.05 431.37 479.22 432.20 471.50 C433.03 463.78 434.18 447.52 435.20 441.10 C436.22 434.68 437.45 435.72 438.30 433.00 C439.15 430.28 439.46 432.93 440.30 424.80 C441.14 416.67 442.50 391.13 443.35 384.20 C444.20 377.27 444.62 384.15 445.40 383.20 C446.17 382.25 447.23 378.17 448.00 378.50 C448.77 378.83 449.25 381.37 450.00 385.20 C450.75 389.03 451.48 401.33 452.50 401.50 C453.52 401.67 454.75 384.52 456.10 386.20 C457.45 387.88 459.23 406.52 460.60 411.60 C461.97 416.68 462.95 418.90 464.30 416.70 C465.65 414.50 467.02 402.28 468.70 398.40 C470.38 394.52 472.87 392.38 474.40 393.40 C475.93 394.42 476.82 401.63 477.90 404.50 C478.98 407.37 479.55 402.48 480.90 410.60 C482.25 418.73 484.65 445.63 486.00 453.25 C487.35 460.87 487.98 459.01 489.00 456.30 C490.02 453.59 490.92 447.67 492.10 437.00 C493.28 426.33 495.12 400.77 496.10 392.30 C497.08 383.83 497.33 386.53 498.00 386.20 C498.67 385.87 499.42 388.27 500.10 390.30 C500.78 392.33 501.43 397.22 502.10 398.40 C502.77 399.58 502.98 400.17 504.10 397.40 C505.22 394.63 507.62 383.32 508.80 381.80 C509.98 380.28 510.12 383.50 511.20 388.30 C512.28 393.10 514.00 404.10 515.30 410.60 C516.60 417.10 517.98 425.27 519.00 427.30 C520.02 429.33 520.50 426.33 521.40 422.80 C522.30 419.27 523.55 408.30 524.40 406.10 C525.25 403.90 525.82 405.12 526.50 409.60 C527.18 414.08 527.58 424.88 528.50 433.00 C529.42 441.12 530.98 455.27 532.00 458.30 C533.02 461.33 533.83 453.33 534.60 451.20 C535.37 449.07 535.82 445.50 536.60 445.50 C537.38 445.50 538.28 452.95 539.30 451.20 C540.32 449.45 541.79 438.32 542.70 435.00 C543.61 431.68 543.83 431.23 544.75 431.30 C545.67 431.37 547.08 433.50 548.20 435.40 C549.32 437.30 550.17 442.93 551.45 442.70 C552.73 442.47 554.48 436.82 555.90 434.00 C557.32 431.18 558.65 429.70 560.00 425.80 C561.35 421.90 562.48 416.68 564.00 410.60 C565.52 404.52 567.81 392.00 569.10 389.30 C570.39 386.60 570.62 390.02 571.75 394.40 C572.88 398.78 574.82 413.55 575.90 415.60 C576.98 417.65 577.43 412.48 578.20 406.70 C578.97 400.92 579.72 386.57 580.50 380.90 C581.28 375.23 582.23 374.65 582.90 372.70 C583.57 370.75 583.92 374.08 584.50 369.20 C585.08 364.32 585.69 349.72 586.40 343.40 C587.11 337.07 587.77 332.42 588.75 331.25 C589.73 330.08 591.12 335.34 592.30 336.40 C593.47 337.46 594.63 335.83 595.80 337.60 C596.97 339.37 598.13 343.88 599.30 347.00 C600.47 350.12 601.63 350.05 602.80 356.30 C603.97 362.55 605.32 379.62 606.30 384.50 C607.28 389.38 607.80 384.43 608.70 385.60 C609.60 386.77 610.73 387.98 611.70 391.50 C612.67 395.02 613.63 402.99 614.50 406.70 C615.37 410.41 616.03 410.03 616.90 413.75 C617.77 417.47 618.92 426.66 619.70 429.00 C620.48 431.34 620.51 433.47 621.60 427.80 C622.69 422.13 624.50 404.18 626.25 395.00 C628.00 385.82 630.54 373.48 632.10 372.70 C633.66 371.92 634.03 377.68 635.60 390.30 C637.17 402.92 639.93 439.80 641.50 448.40 C643.07 457.00 644.03 444.37 645.00 441.90 C645.97 439.43 646.32 437.85 647.30 433.60 C648.28 429.35 649.98 418.62 650.90 416.40 C651.82 414.18 651.97 415.22 652.80 420.30 C653.63 425.38 654.85 437.52 655.90 446.90 C656.95 456.28 658.00 468.53 659.10 476.60 C660.20 484.67 661.47 493.48 662.50 495.30 C663.53 497.12 664.18 492.45 665.30 487.50 C666.42 482.55 668.03 472.12 669.20 465.60 C670.37 459.08 671.25 452.70 672.30 448.40 C673.35 444.10 674.58 441.37 675.50 439.80 C676.42 438.23 676.68 440.90 677.80 439.00 C678.92 437.10 681.03 428.65 682.20 428.40 C683.37 428.15 684.18 434.55 684.80 437.50 C685.42 440.45 685.24 444.28 685.90 446.10 C686.56 447.92 687.88 446.18 688.75 448.40 C689.62 450.62 690.27 454.70 691.10 459.40 C691.93 464.10 692.63 475.10 693.75 476.60 C694.87 478.10 696.34 467.50 697.80 468.40 C699.26 469.30 700.88 482.85 702.50 482.00 C704.12 481.15 706.15 466.68 707.50 463.30 C708.85 459.92 709.56 461.37 710.60 461.70 C711.64 462.03 712.45 464.38 713.75 465.30 C715.05 466.22 717.09 465.07 718.40 467.20 C719.71 469.33 720.29 477.68 721.60 478.10 C722.91 478.52 724.70 470.01 726.25 469.70 C727.80 469.39 729.59 475.28 730.90 476.25 C732.21 477.22 732.79 478.38 734.10 475.50 C735.41 472.62 737.58 462.13 738.75 459.00 C739.92 455.87 740.27 457.87 741.10 456.70 C741.93 455.53 742.72 451.73 743.75 452.00 C744.78 452.27 746.05 457.00 747.30 458.30 C748.55 459.60 749.93 459.15 751.25 459.80 C752.57 460.45 754.16 462.33 755.20 462.20 C756.24 462.07 756.20 463.57 757.50 459.00 C758.80 454.43 761.57 437.13 763.00 434.80 C764.43 432.47 764.93 440.43 766.10 445.00 C767.27 449.57 768.31 455.17 770.00 462.20 C771.69 469.23 774.30 485.77 776.25 487.20 C778.20 488.63 780.14 471.83 781.70 470.80 C783.26 469.77 783.90 476.18 785.60 481.00 C787.30 485.82 789.82 494.90 791.90 499.70 C793.98 504.50 796.54 508.25 798.10 509.80 C799.66 511.35 799.95 509.52 801.25 509.00 C802.55 508.48 804.34 505.78 805.90 506.70 C807.46 507.62 809.03 514.37 810.60 514.50 C812.17 514.63 813.78 509.71 815.30 507.50 C816.82 505.29 818.45 501.52 819.70 501.25 C820.95 500.98 821.63 505.69 822.80 505.90 C823.97 506.11 825.53 502.23 826.70 502.50 C827.87 502.77 828.50 507.77 829.80 507.50 C831.10 507.23 833.07 502.20 834.50 500.90 C835.93 499.60 836.97 500.95 838.40 499.70 C839.83 498.45 841.67 494.18 843.10 493.40 C844.53 492.62 845.82 493.43 847.00 495.00 C848.18 496.57 849.02 500.07 850.20 502.80 C851.38 505.53 852.93 511.66 854.10 511.40 C855.27 511.14 856.03 505.82 857.20 501.25 C858.37 496.68 859.80 485.96 861.10 484.00 C862.40 482.04 863.70 490.40 865.00 489.50 C866.30 488.60 867.60 481.85 868.90 478.60 C870.20 475.35 871.75 474.56 872.80 470.00 C873.85 465.44 874.42 455.42 875.20 451.25 C875.98 447.08 876.47 445.39 877.50 445.00 C878.53 444.61 880.23 449.03 881.40 448.90 C882.57 448.77 882.93 447.07 884.50 444.20 C886.07 441.33 889.37 433.13 890.80 431.70 C892.23 430.27 891.93 432.34 893.10 435.60 C894.27 438.86 896.44 445.13 897.80 451.25 C899.16 457.37 899.82 470.09 901.25 472.30 C902.68 474.51 905.15 465.15 906.40 464.50 C907.65 463.85 907.97 467.53 908.75 468.40 C909.53 469.27 910.27 468.85 911.10 469.70 C911.93 470.55 913.00 472.93 913.75 473.50 C914.50 474.07 914.66 473.73 915.60 473.10 C916.54 472.48 918.15 469.12 919.40 469.75 C920.65 470.38 921.96 475.23 923.10 476.90 C924.24 478.57 925.20 478.57 926.25 479.75 C927.30 480.93 928.26 483.23 929.40 484.00 C930.54 484.77 932.17 484.07 933.10 484.40 C934.03 484.73 934.37 486.73 935.00 486.00 C935.63 485.27 936.17 481.52 936.90 480.00 C937.63 478.48 938.57 476.69 939.40 476.90 C940.23 477.11 940.76 482.08 941.90 481.25 C943.04 480.42 944.48 472.52 946.25 471.90 C948.02 471.27 950.52 474.27 952.50 477.50 C954.48 480.73 956.75 489.00 958.10 491.25 C959.45 493.50 959.45 492.04 960.60 491.00 C961.75 489.96 963.48 486.88 965.00 485.00 C966.52 483.12 968.50 480.07 969.75 479.75 C971.00 479.43 971.00 479.52 972.50 483.10 C974.00 486.68 977.18 499.89 978.75 501.25 C980.32 502.61 980.86 494.83 981.90 491.25 C982.94 487.67 983.75 482.56 985.00 479.75 C986.25 476.94 988.05 475.71 989.40 474.40 C990.75 473.09 992.00 472.88 993.10 471.90 C994.20 470.92 995.06 468.61 996.00 468.50 C996.94 468.39 997.92 468.82 998.75 471.25 C999.58 473.68 1000.38 481.43 1001.00 483.10 C1001.62 484.77 1002.08 482.50 1002.50 481.25 C1002.92 480.00 1003.33 476.54 1003.50 475.60" fill="none" stroke="#bc0000" stroke-width="1.3" stroke-linejoin="round"/>
<path d="M807.4 510.4l8 8M815.4 510.4l-8 8" stroke="#bcbcbc" stroke-width="1"/>
</svg>












<div style="position:absolute;left:30px;top:560px;width:987px;height:3px;background:#fcfcfc;"></div>
<div style="position:absolute;left:30px;top:563px;width:987px;height:36px;background:#f0f0f0;"></div>
<div style="position:absolute;left:31px;top:563px;width:985px;height:1.5px;background:#d4d4d4;"></div>
<div style="position:absolute;left:30px;top:562px;width:1px;height:37px;background:#fcfcfc;"></div>
<div style="position:absolute;left:1015.3px;top:563px;width:1.5px;height:36px;background:#8c8c8c;"></div>
<div style="position:absolute;left:96.5px;top:597.5px;width:920.3px;height:1.3px;background:#8c8c8c;"></div>
<div style="position:absolute;left:36.7px;top:570.7px;width:24px;height:15.8px;background:#80ffff;border-top:1px solid #f4f4f4;border-left:1px solid #f4f4f4;border-right:1px solid #404040;border-bottom:1.5px solid #404040;"></div>
<div class="t" style="left:44.5px;top:573px;font:bold 10px 'Liberation Sans';color:#e8d000;text-shadow:0 0 1px #000,0.5px 0.5px 0 #000;">?</div>


<div style="position:absolute;left:70.2px;top:583.5px;width:126px;height:10px;background:#f0f0f0;border-top:1px solid #fff;border-left:1px solid #fff;border-right:1px solid #606060;border-bottom:1px solid #606060;"></div>

<div style="position:absolute;left:260.3px;top:583.5px;width:127px;height:10px;background:#f0f0f0;border-top:1px solid #fff;border-left:1px solid #fff;border-right:1px solid #606060;border-bottom:1px solid #606060;"></div>

<div style="position:absolute;left:30px;top:598px;width:987px;height:17px;background:#f0f0f0;"></div>
<div style="position:absolute;left:30.4px;top:599px;width:66.5px;height:14px;background:#f0f0f0;border-right:1px solid #707070;border-bottom:1.2px solid #9a9a9a;"></div>
<div style="position:absolute;left:96.5px;top:598.8px;width:920px;height:1px;background:#fcfcfc;"></div>
<div style="position:absolute;left:96.5px;top:597.5px;width:920.3px;height:1.3px;background:#8c8c8c;"></div>

<div style="position:absolute;left:27.5px;top:26px;width:2px;height:589px;background:#858585;"></div>
<div style="position:absolute;left:29.5px;top:563px;width:1.2px;height:50px;background:#fafafa;"></div>
<div style="position:absolute;left:0;top:615px;width:1024px;height:25px;background:linear-gradient(#5a6670 0,#2c3a46 6%,#18232e 40%,#101a24 100%);"></div>
<div style="position:absolute;left:4.7px;top:616.9px;width:23px;height:22px;border-radius:50%;background:radial-gradient(circle at 50% 30%,#7ac0f0 0,#2a70b8 40%,#10407a 70%,#40a0e0 92%,#1a3050 100%);box-shadow:0 0 1.5px #5a90c0;"></div>
<svg style="position:absolute;left:9px;top:620.5px" width="15" height="14" viewBox="0 0 15 14"><path d="M1.5 2.5q2.5-1.5 5.5 0l-0.8 4.3q-2.8-1.3-5.5 0z" fill="#f25022"/><path d="M7.6 2.8q3 1.3 6-0.2l-0.8 4.3q-3 1.3-6 0z" fill="#7fba00"/><path d="M0.6 7.4q2.7-1.3 5.5 0l-0.8 4.3q-2.7-1.3-5.5 0z" fill="#00a4ef"/><path d="M6.7 7.6q3 1.3 6-0.2l-0.8 4.3q-3 1.3-6 0z" fill="#ffb900"/></svg>
<svg style="position:absolute;left:44px;top:619px" width="21" height="19" viewBox="0 0 21 19"><path d="M1 3h7l1.5 2h10.5v13h-19z" fill="#e8c860"/><rect x="2" y="6" width="17" height="11.5" fill="#f8e8a8"/><rect x="3" y="2" width="3" height="2" fill="#60c040"/><rect x="7" y="2.5" width="3" height="2" fill="#e05050"/><path d="M4 11h13v5h-13z" fill="#8ab8e0"/><path d="M6 13.5l3-2v4z" fill="#fff"/></svg>
<svg style="position:absolute;left:82px;top:618px" width="20" height="20" viewBox="0 0 20 20"><ellipse cx="10" cy="11" rx="6.5" ry="6.5" fill="none" stroke="#2a8ae0" stroke-width="3.2"/><rect x="5" y="10" width="10" height="2" fill="#2a8ae0"/><path d="M11 12h6" stroke="#101a24" stroke-width="2.5"/><path d="M2 17q-2-3 6-9t11-7q1 2-3 6" fill="none" stroke="#f0c020" stroke-width="1.3"/></svg>
<svg style="position:absolute;left:120.6px;top:621px" width="17" height="16" viewBox="0 0 17 16"><rect x="0.5" y="0.5" width="15" height="15" rx="1" fill="#7fb8e0" stroke="#b8d8f0" stroke-width="0.6"/><circle cx="7.5" cy="8" r="5.2" fill="#f07820"/><path d="M5.8 5v6l5-3z" fill="#fff"/></svg>
<svg style="position:absolute;left:158.8px;top:619px" width="18" height="18" viewBox="0 0 18 18"><circle cx="9" cy="9" r="8.3" fill="#dd4b39"/><path d="M9 9L1.3 5.5A8.3 8.3 0 0 0 6 16.8z" fill="#1da462"/><path d="M9 9L6 16.8A8.3 8.3 0 0 0 16.8 6.5z" fill="#ffcd46"/><path d="M9 9L16.8 6.5A8.3 8.3 0 0 0 9 0.7z" fill="#dd4b39"/><circle cx="9" cy="9" r="3.9" fill="#fff"/><circle cx="9" cy="9" r="3" fill="#4a8af4"/></svg>
<div style="position:absolute;left:187.4px;top:616px;width:34px;height:24px;background:linear-gradient(#8a949c,#56606a 50%,#3c464e);border:1px solid #9aa4ac;border-radius:2px;"></div>
<div style="position:absolute;left:193px;top:617.6px;width:21px;height:20px;background:repeating-conic-gradient(#111 0 25%,#e8e8e8 0 50%) 0 0/5px 5px;"></div>
<div class="t" style="left:195px;top:621px;font:bold italic 12px 'Liberation Sans';color:#f0f000;text-shadow:0 0 1px #000;">R<span style="color:#fff;font-size:11px;">p</span></div>


<svg style="position:absolute;left:806px;top:622px" width="12" height="12" viewBox="0 0 12 12"><path d="M1 2l4-0.5v4h-4zM6 1.3l5-0.8v5h-5zM1 6.5h4v4l-4-0.5zM6 6.5h5v5l-5-0.8z" fill="#fff"/></svg>
<svg style="position:absolute;left:822px;top:622px" width="12" height="12" viewBox="0 0 12 12"><rect x="0" y="2" width="12" height="8" fill="#222"/><rect x="1" y="3" width="10" height="3" fill="#cfd8e8"/><rect x="2" y="6" width="8" height="2" fill="#3a5ab8"/></svg>
<svg style="position:absolute;left:836px;top:622px" width="12" height="12" viewBox="0 0 12 12"><circle cx="6" cy="6" r="5.5" fill="#c8d0d8"/><circle cx="6" cy="6" r="3.5" fill="#1a3a6a"/><circle cx="6" cy="6" r="2" fill="#8ab"/></svg>
<svg style="position:absolute;left:850px;top:622px" width="12" height="12" viewBox="0 0 12 12"><circle cx="6" cy="6" r="5.5" fill="#1a4a8a"/><circle cx="7" cy="5" r="2" fill="#fff"/><path d="M1 7l5 2" stroke="#fff" stroke-width="1.2"/></svg>
<svg style="position:absolute;left:865px;top:622px" width="12" height="12" viewBox="0 0 12 12"><path d="M1.5 1v11" stroke="#fff" stroke-width="1"/><path d="M2 1.5h7l-1.5 2.5 1.5 2.5h-7z" fill="#f0f0f0"/></svg>
<svg style="position:absolute;left:879px;top:622px" width="12" height="12" viewBox="0 0 12 12"><ellipse cx="6" cy="6" rx="5.2" ry="5.2" fill="#3a9ae8"/><path d="M2 5h8M2 7h8" stroke="#fff" stroke-width="1"/></svg>
<svg style="position:absolute;left:893px;top:622px" width="12" height="12" viewBox="0 0 12 12"><rect x="0.5" y="1" width="11" height="9" fill="#2a4a90"/><rect x="1.5" y="2" width="9" height="5" fill="#9ac8f0"/></svg>
<svg style="position:absolute;left:908px;top:622px" width="12" height="12" viewBox="0 0 12 12"><path d="M1 6q5-6 11 0q-5 6-11 0z" fill="#76b900"/><circle cx="6" cy="6" r="2" fill="#2a4010"/></svg>
<svg style="position:absolute;left:922px;top:622px" width="12" height="12" viewBox="0 0 12 12"><rect x="1" y="3" width="10" height="8" fill="#ddd"/><rect x="2" y="4" width="8" height="5" fill="#333"/><path d="M3 0v3M9 0v3" stroke="#fff"/></svg>
<svg style="position:absolute;left:937px;top:622px" width="12" height="12" viewBox="0 0 12 12"><path d="M1 4h2.5l3-3v10l-3-3h-2.5z" fill="#e8e8e8"/><path d="M8 3q2 3 0 6M9.5 1.5q3 4.5 0 9" stroke="#e8e8e8" fill="none" stroke-width="0.9"/></svg>
<svg style="position:absolute;left:950px;top:622px" width="12" height="12" viewBox="0 0 12 12"><path d="M1 4h2.5l4-3.5v11l-4-3.5h-2.5z" fill="#e85a2a"/></svg>


<div style="position:absolute;left:1015px;top:616px;width:9px;height:24px;background:linear-gradient(#6a747c,#404a52);border-left:1px solid #8a949c;border-top:1px solid #8a949c;border-radius:2px 0 0 0;"></div>
<svg style="position:absolute;left:0;top:0;pointer-events:none" width="1024" height="640" viewBox="0 0 1024 640" font-family="Liberation Sans">
<defs><clipPath id="c1"><rect x="320" y="60" width="38" height="14"/></clipPath><clipPath id="c2"><rect x="1000" y="43" width="14.6" height="60"/></clipPath></defs>
<text x="13.00" y="8.90" font-size="7.9" font-weight="normal" fill="#1a1a30" textLength="32.00" lengthAdjust="spacingAndGlyphs" stroke="#1a1a30" stroke-width="0.2">DataLinkII</text>
<text x="4.40" y="22.00" font-size="8.2" font-weight="normal" fill="#000" textLength="10.60" lengthAdjust="spacingAndGlyphs">File</text>
<text x="23.50" y="22.00" font-size="8.2" font-weight="normal" fill="#000" textLength="12.30" lengthAdjust="spacingAndGlyphs">Edit</text>
<text x="44.80" y="22.00" font-size="8.2" font-weight="normal" fill="#000" textLength="31.90" lengthAdjust="spacingAndGlyphs">Telemetry</text>
<text x="85.50" y="22.00" font-size="8.2" font-weight="normal" fill="#000" textLength="22.50" lengthAdjust="spacingAndGlyphs">Runlog</text>
<text x="117.00" y="22.00" font-size="8.2" font-weight="normal" fill="#000" textLength="34.00" lengthAdjust="spacingAndGlyphs">Track Map</text>
<text x="159.70" y="22.00" font-size="8.2" font-weight="normal" fill="#000" textLength="15.10" lengthAdjust="spacingAndGlyphs">View</text>
<text x="183.40" y="22.00" font-size="8.2" font-weight="normal" fill="#000" textLength="25.80" lengthAdjust="spacingAndGlyphs">Settings</text>
<text x="217.80" y="22.00" font-size="8.2" font-weight="normal" fill="#000" textLength="25.30" lengthAdjust="spacingAndGlyphs">Security</text>
<text x="251.40" y="22.00" font-size="8.2" font-weight="normal" fill="#000" textLength="14.85" lengthAdjust="spacingAndGlyphs">Help</text>
<text x="48.00" y="38.90" font-size="9" font-weight="bold" fill="#111" textLength="23.10" lengthAdjust="spacingAndGlyphs" stroke="#111" stroke-width="0.3">Graph</text>
<text x="92.30" y="39.20" font-size="9" font-weight="bold" fill="#1a1aff" textLength="60.90" lengthAdjust="spacingAndGlyphs" stroke="#1a1aff" stroke-width="0.25">IQKin052315R2</text>
<text x="37.80" y="56.10" font-size="8.5" font-weight="bold" fill="#0c0c0c" textLength="46.87" lengthAdjust="spacingAndGlyphs" stroke="#0c0c0c" stroke-width="0.2">Engine RPM</text>
<text x="37.80" y="70.70" font-size="8.5" font-weight="bold" fill="#0c0c0c" textLength="37.06" lengthAdjust="spacingAndGlyphs" stroke="#0c0c0c" stroke-width="0.2">Vertical G</text>
<text x="37.80" y="85.30" font-size="8.5" font-weight="bold" fill="#0c0c0c" textLength="34.83" lengthAdjust="spacingAndGlyphs" stroke="#0c0c0c" stroke-width="0.2">Lateral G</text>
<text x="123.90" y="56.10" font-size="8.5" font-weight="bold" fill="#0c0c0c" textLength="4.20" lengthAdjust="spacingAndGlyphs" stroke="#0c0c0c" stroke-width="0.2">0</text>
<text x="116.40" y="70.70" font-size="8.5" font-weight="bold" fill="#0c0c0c" textLength="11.60" lengthAdjust="spacingAndGlyphs" stroke="#0c0c0c" stroke-width="0.2">0.0</text>
<text x="114.25" y="85.30" font-size="8.5" font-weight="bold" fill="#0c0c0c" textLength="13.55" lengthAdjust="spacingAndGlyphs" stroke="#0c0c0c" stroke-width="0.2">-1.5</text>
<text x="145.70" y="56.10" font-size="8.5" font-weight="bold" fill="#0c0c0c" textLength="29.92" lengthAdjust="spacingAndGlyphs" stroke="#0c0c0c" stroke-width="0.2">Accel G</text>
<text x="145.70" y="70.70" font-size="8.5" font-weight="bold" fill="#0c0c0c" textLength="48.51" lengthAdjust="spacingAndGlyphs" stroke="#0c0c0c" stroke-width="0.2">Logger Volts</text>
<text x="145.70" y="85.30" font-size="8.5" font-weight="bold" fill="#0c0c0c" textLength="54.47" lengthAdjust="spacingAndGlyphs" stroke="#0c0c0c" stroke-width="0.2">Gear Indicator</text>
<text x="222.00" y="56.10" font-size="8.5" font-weight="bold" fill="#0c0c0c" textLength="13.50" lengthAdjust="spacingAndGlyphs" stroke="#0c0c0c" stroke-width="0.2">-0.5</text>
<text x="222.00" y="70.70" font-size="8.5" font-weight="bold" fill="#0c0c0c" textLength="15.00" lengthAdjust="spacingAndGlyphs" stroke="#0c0c0c" stroke-width="0.2">13.4</text>
<text x="226.50" y="85.30" font-size="8.5" font-weight="bold" fill="#0c0c0c" textLength="4.50" lengthAdjust="spacingAndGlyphs" stroke="#0c0c0c" stroke-width="0.2">0</text>
<text x="253.60" y="56.10" font-size="8.5" font-weight="bold" fill="#0c0c0c" textLength="50.29" lengthAdjust="spacingAndGlyphs" stroke="#0c0c0c" stroke-width="0.2">Logger Temp</text>
<text x="253.60" y="70.70" font-size="8.5" font-weight="bold" fill="#0c0c0c" textLength="38.85" lengthAdjust="spacingAndGlyphs" stroke="#0c0c0c" stroke-width="0.2">GPS_Data</text>
<text x="253.60" y="85.30" font-size="8.5" font-weight="bold" fill="#0c0c0c" textLength="56.71" lengthAdjust="spacingAndGlyphs" stroke="#0c0c0c" stroke-width="0.2">GPS_Satellites</text>
<text x="332.00" y="56.10" font-size="8.5" font-weight="bold" fill="#0c0c0c" textLength="8.80" lengthAdjust="spacingAndGlyphs" stroke="#0c0c0c" stroke-width="0.2">39</text>
<text x="327.60" y="70.70" font-size="8.5" font-weight="bold" fill="#0c0c0c" textLength="33.50" lengthAdjust="spacingAndGlyphs" stroke="#0c0c0c" stroke-width="0.2" clip-path="url(#c1)">15204.72</text>
<text x="327.60" y="85.30" font-size="8.5" font-weight="bold" fill="#0c0c0c" textLength="15.10" lengthAdjust="spacingAndGlyphs" stroke="#0c0c0c" stroke-width="0.2">8.00</text>
<text x="361.50" y="56.10" font-size="8.5" font-weight="bold" fill="#0c0c0c" textLength="53.13" lengthAdjust="spacingAndGlyphs" stroke="#0c0c0c" stroke-width="0.2">GPS_Heading</text>
<text x="361.50" y="70.70" font-size="8.5" font-weight="bold" fill="#0c0c0c" textLength="51.33" lengthAdjust="spacingAndGlyphs" stroke="#0c0c0c" stroke-width="0.2">GPS_Altitude</text>
<text x="361.50" y="85.30" font-size="8.5" font-weight="bold" fill="#0c0c0c" textLength="38.39" lengthAdjust="spacingAndGlyphs" stroke="#0c0c0c" stroke-width="0.2">GPS_KPH</text>
<text x="435.70" y="56.10" font-size="8.5" font-weight="bold" fill="#0c0c0c" textLength="23.10" lengthAdjust="spacingAndGlyphs" stroke="#0c0c0c" stroke-width="0.2">124.72</text>
<text x="435.70" y="70.70" font-size="8.5" font-weight="bold" fill="#0c0c0c" textLength="12.10" lengthAdjust="spacingAndGlyphs" stroke="#0c0c0c" stroke-width="0.2">150</text>
<text x="435.70" y="85.30" font-size="8.5" font-weight="bold" fill="#0c0c0c" textLength="18.70" lengthAdjust="spacingAndGlyphs" stroke="#0c0c0c" stroke-width="0.2">95.42</text>
<text x="469.40" y="56.10" font-size="8.5" font-weight="bold" fill="#0c0c0c" textLength="32.16" lengthAdjust="spacingAndGlyphs" stroke="#0c0c0c" stroke-width="0.2">GPS_Gs</text>
<text x="469.40" y="70.70" font-size="8.5" font-weight="bold" fill="#0c0c0c" textLength="39.73" lengthAdjust="spacingAndGlyphs" stroke="#0c0c0c" stroke-width="0.2">GPS_LatG</text>
<text x="469.40" y="85.30" font-size="8.5" font-weight="bold" fill="#0c0c0c" textLength="41.08" lengthAdjust="spacingAndGlyphs" stroke="#0c0c0c" stroke-width="0.2">GPS_LapX</text>
<text x="543.20" y="56.10" font-size="8.5" font-weight="bold" fill="#0c0c0c" textLength="14.80" lengthAdjust="spacingAndGlyphs" stroke="#0c0c0c" stroke-width="0.2">0.06</text>
<text x="543.20" y="70.70" font-size="8.5" font-weight="bold" fill="#0c0c0c" textLength="14.80" lengthAdjust="spacingAndGlyphs" stroke="#0c0c0c" stroke-width="0.2">1.46</text>
<text x="543.20" y="85.30" font-size="8.5" font-weight="bold" fill="#0c0c0c" textLength="28.10" lengthAdjust="spacingAndGlyphs" stroke="#0c0c0c" stroke-width="0.2">1791.94</text>
<text x="577.30" y="56.10" font-size="8.5" font-weight="bold" fill="#0c0c0c" textLength="45.09" lengthAdjust="spacingAndGlyphs" stroke="#0c0c0c" stroke-width="0.2">LapMarkers</text>
<text x="577.30" y="70.70" font-size="8.5" font-weight="bold" fill="#0c0c0c" textLength="40.62" lengthAdjust="spacingAndGlyphs" stroke="#0c0c0c" stroke-width="0.2">GPS_LapT</text>
<text x="577.30" y="85.30" font-size="8.5" font-weight="bold" fill="#0c0c0c" textLength="62.95" lengthAdjust="spacingAndGlyphs" stroke="#0c0c0c" stroke-width="0.2">LapT_Difference</text>
<text x="651.30" y="56.10" font-size="8.5" font-weight="bold" fill="#0c0c0c" textLength="17.50" lengthAdjust="spacingAndGlyphs" stroke="#0c0c0c" stroke-width="0.2">+###</text>
<text x="651.30" y="70.70" font-size="8.5" font-weight="bold" fill="#0c0c0c" textLength="19.00" lengthAdjust="spacingAndGlyphs" stroke="#0c0c0c" stroke-width="0.2">12.10</text>
<text x="651.30" y="85.30" font-size="8.5" font-weight="bold" fill="#0c0c0c" textLength="17.50" lengthAdjust="spacingAndGlyphs" stroke="#0c0c0c" stroke-width="0.2">+###</text>
<text x="685.20" y="56.10" font-size="8.5" font-weight="bold" fill="#0c0c0c" textLength="62.06" lengthAdjust="spacingAndGlyphs" stroke="#0c0c0c" stroke-width="0.2">LatG_Difference</text>
<text x="685.20" y="70.70" font-size="8.5" font-weight="bold" fill="#0c0c0c" textLength="64.75" lengthAdjust="spacingAndGlyphs" stroke="#0c0c0c" stroke-width="0.2">AccG_Difference</text>
<text x="685.20" y="85.30" font-size="8.5" font-weight="bold" fill="#0c0c0c" textLength="60.72" lengthAdjust="spacingAndGlyphs" stroke="#0c0c0c" stroke-width="0.2">KPH_Difference</text>
<text x="759.00" y="56.10" font-size="8.5" font-weight="bold" fill="#0c0c0c" textLength="17.60" lengthAdjust="spacingAndGlyphs" stroke="#0c0c0c" stroke-width="0.2">+###</text>
<text x="759.00" y="70.70" font-size="8.5" font-weight="bold" fill="#0c0c0c" textLength="17.60" lengthAdjust="spacingAndGlyphs" stroke="#0c0c0c" stroke-width="0.2">+###</text>
<text x="759.00" y="85.30" font-size="8.5" font-weight="bold" fill="#0c0c0c" textLength="17.60" lengthAdjust="spacingAndGlyphs" stroke="#0c0c0c" stroke-width="0.2">+###</text>
<text x="793.10" y="56.10" font-size="8.5" font-weight="bold" fill="#0c0c0c" textLength="18.60" lengthAdjust="spacingAndGlyphs" stroke="#0c0c0c" stroke-width="0.2">Time</text>
<text x="793.10" y="70.70" font-size="8.5" font-weight="bold" fill="#0c0c0c" textLength="46.44" lengthAdjust="spacingAndGlyphs" stroke="#0c0c0c" stroke-width="0.2">Pump Press</text>
<text x="793.10" y="85.30" font-size="8.5" font-weight="bold" fill="#0c0c0c" textLength="34.83" lengthAdjust="spacingAndGlyphs" stroke="#0c0c0c" stroke-width="0.2">Oil Press</text>
<text x="867.00" y="56.10" font-size="8.5" font-weight="bold" fill="#0c0c0c" textLength="23.40" lengthAdjust="spacingAndGlyphs" stroke="#0c0c0c" stroke-width="0.2">167.72</text>
<text x="871.40" y="70.70" font-size="8.5" font-weight="bold" fill="#0c0c0c" textLength="11.00" lengthAdjust="spacingAndGlyphs" stroke="#0c0c0c" stroke-width="0.2">3.3</text>
<text x="871.40" y="85.30" font-size="8.5" font-weight="bold" fill="#0c0c0c" textLength="10.60" lengthAdjust="spacingAndGlyphs" stroke="#0c0c0c" stroke-width="0.2">2.1</text>
<text x="901.00" y="56.10" font-size="8.5" font-weight="bold" fill="#0c0c0c" textLength="33.78" lengthAdjust="spacingAndGlyphs" stroke="#0c0c0c" stroke-width="0.2">Oil Temp</text>
<text x="901.00" y="70.70" font-size="8.5" font-weight="bold" fill="#0c0c0c" textLength="34.37" lengthAdjust="spacingAndGlyphs" stroke="#0c0c0c" stroke-width="0.2">A/F Cyl 1</text>
<text x="901.00" y="85.30" font-size="8.5" font-weight="bold" fill="#0c0c0c" textLength="61.59" lengthAdjust="spacingAndGlyphs" stroke="#0c0c0c" stroke-width="0.2">EFI Engine RPM</text>
<text x="976.60" y="56.10" font-size="8.5" font-weight="bold" fill="#0c0c0c" textLength="16.10" lengthAdjust="spacingAndGlyphs" stroke="#0c0c0c" stroke-width="0.2">82.5</text>
<text x="977.00" y="70.70" font-size="8.5" font-weight="bold" fill="#0c0c0c" textLength="19.00" lengthAdjust="spacingAndGlyphs" stroke="#0c0c0c" stroke-width="0.2">12.17</text>
<text x="974.80" y="85.30" font-size="8.5" font-weight="bold" fill="#0c0c0c" textLength="16.60" lengthAdjust="spacingAndGlyphs" stroke="#0c0c0c" stroke-width="0.2">3898</text>
<text x="53.40" y="134.10" font-size="8.7" font-weight="bold" fill="#0a0a0a" textLength="29.00" lengthAdjust="spacingAndGlyphs" stroke="#0a0a0a" stroke-width="0.25">167.721</text>
<text x="117.71" y="134.10" font-size="8.7" font-weight="bold" fill="#0a0a0a" textLength="13.49" lengthAdjust="spacingAndGlyphs" stroke="#0a0a0a" stroke-width="0.25">###</text>
<text x="164.51" y="134.10" font-size="8.7" font-weight="bold" fill="#0a0a0a" textLength="13.49" lengthAdjust="spacingAndGlyphs" stroke="#0a0a0a" stroke-width="0.25">###</text>
<text x="51.70" y="144.90" font-size="8.4" font-weight="normal" fill="#c4c4c4" textLength="15.20" lengthAdjust="spacingAndGlyphs">time</text>
<text x="90.50" y="144.90" font-size="8.4" font-weight="normal" fill="#c4c4c4" textLength="41.50" lengthAdjust="spacingAndGlyphs">main lap tm</text>
<text x="141.00" y="144.90" font-size="8.4" font-weight="normal" fill="#c4c4c4" textLength="34.00" lengthAdjust="spacingAndGlyphs">ref lap tm</text>
<text x="653.50" y="134.20" font-size="8.7" font-weight="bold" fill="#0a0a0a" textLength="61.50" lengthAdjust="spacingAndGlyphs" stroke="#0a0a0a" stroke-width="0.25">IQKin052315R2</text>
<text x="727.00" y="134.20" font-size="8.7" font-weight="bold" fill="#0a0a0a" textLength="36.40" lengthAdjust="spacingAndGlyphs" stroke="#0a0a0a" stroke-width="0.25">Oil Press</text>
<text x="707.40" y="146.30" font-size="8.4" font-weight="normal" fill="#c4c4c4" textLength="54.60" lengthAdjust="spacingAndGlyphs">file/grid channel</text>
<text x="845.30" y="134.10" font-size="8.7" font-weight="bold" fill="#0a0a0a" textLength="11.70" lengthAdjust="spacingAndGlyphs" stroke="#0a0a0a" stroke-width="0.25">2.1</text>
<text x="836.31" y="144.90" font-size="8.4" font-weight="normal" fill="#c4c4c4" textLength="10.18" lengthAdjust="spacingAndGlyphs">val</text>
<text x="883.40" y="134.10" font-size="8.7" font-weight="bold" fill="#0a0a0a" textLength="12.30" lengthAdjust="spacingAndGlyphs" stroke="#0a0a0a" stroke-width="0.25">4.2</text>
<text x="873.58" y="144.90" font-size="8.4" font-weight="normal" fill="#c4c4c4" textLength="12.84" lengthAdjust="spacingAndGlyphs">avg</text>
<text x="921.50" y="134.10" font-size="8.7" font-weight="bold" fill="#0a0a0a" textLength="12.70" lengthAdjust="spacingAndGlyphs" stroke="#0a0a0a" stroke-width="0.25">2.1</text>
<text x="911.59" y="144.90" font-size="8.4" font-weight="normal" fill="#c4c4c4" textLength="12.82" lengthAdjust="spacingAndGlyphs">min</text>
<text x="960.10" y="134.10" font-size="8.7" font-weight="bold" fill="#0a0a0a" textLength="12.15" lengthAdjust="spacingAndGlyphs" stroke="#0a0a0a" stroke-width="0.25">5.8</text>
<text x="949.08" y="144.90" font-size="8.4" font-weight="normal" fill="#c4c4c4" textLength="15.04" lengthAdjust="spacingAndGlyphs">max</text>
<text x="979.70" y="134.10" font-size="8.7" font-weight="bold" fill="#0a0a0a" textLength="31.60" lengthAdjust="spacingAndGlyphs" stroke="#0a0a0a" stroke-width="0.25">19.9887</text>
<text x="980.60" y="144.90" font-size="8.4" font-weight="normal" fill="#c4c4c4" textLength="29.10" lengthAdjust="spacingAndGlyphs">avg time</text>
<text x="72.00" y="154.35" font-size="8.5" font-weight="normal" fill="#c8c8c8" textLength="4.40" lengthAdjust="spacingAndGlyphs">8</text>
<text x="72.00" y="216.05" font-size="8.5" font-weight="normal" fill="#c8c8c8" textLength="4.40" lengthAdjust="spacingAndGlyphs">7</text>
<text x="72.00" y="277.75" font-size="8.5" font-weight="normal" fill="#c8c8c8" textLength="4.40" lengthAdjust="spacingAndGlyphs">6</text>
<text x="72.00" y="339.45" font-size="8.5" font-weight="normal" fill="#c8c8c8" textLength="4.40" lengthAdjust="spacingAndGlyphs">5</text>
<text x="72.00" y="401.15" font-size="8.5" font-weight="normal" fill="#c8c8c8" textLength="4.40" lengthAdjust="spacingAndGlyphs">4</text>
<text x="72.00" y="462.85" font-size="8.5" font-weight="normal" fill="#c8c8c8" textLength="4.40" lengthAdjust="spacingAndGlyphs">3</text>
<text x="72.00" y="524.55" font-size="8.5" font-weight="normal" fill="#c8c8c8" textLength="4.40" lengthAdjust="spacingAndGlyphs">2</text>
<text x="214.55" y="559.20" font-size="8.5" font-weight="normal" fill="#c8c8c8" textLength="13.30" lengthAdjust="spacingAndGlyphs">155</text>
<text x="445.85" y="559.20" font-size="8.5" font-weight="normal" fill="#c8c8c8" textLength="13.30" lengthAdjust="spacingAndGlyphs">160</text>
<text x="678.35" y="559.20" font-size="8.5" font-weight="normal" fill="#c8c8c8" textLength="13.30" lengthAdjust="spacingAndGlyphs">165</text>
<text x="909.85" y="559.20" font-size="8.5" font-weight="normal" fill="#c8c8c8" textLength="13.30" lengthAdjust="spacingAndGlyphs">170</text>
<text x="41.20" y="377.50" font-size="9.3" font-weight="normal" fill="#c8c8c8" textLength="55.00" lengthAdjust="spacingAndGlyphs" transform="rotate(-90 41.2 377.5)">Oil Press [Psi]</text>
<text x="80.60" y="577.00" font-size="6.5" font-weight="bold" fill="#1a1a1a" textLength="85.00" lengthAdjust="spacingAndGlyphs">Main LOGBOOK Categories:</text>
<text x="268.60" y="577.00" font-size="6.5" font-weight="bold" fill="#1a1a1a" textLength="87.10" lengthAdjust="spacingAndGlyphs">Favorite Log Page Shortcuts:</text>
<text x="95.50" y="591.40" font-size="6.9" font-weight="bold" fill="#111" textLength="75.50" lengthAdjust="spacingAndGlyphs">Session Info and Weather</text>
<text x="289.50" y="591.40" font-size="6.9" font-weight="bold" fill="#111" textLength="67.20" lengthAdjust="spacingAndGlyphs">Create GPS Track Map</text>
<text x="35.00" y="610.30" font-size="9" font-weight="bold" fill="#111" textLength="56.80" lengthAdjust="spacingAndGlyphs" stroke="#111" stroke-width="0.2">Run Log Menu</text>
<text x="760.00" y="630.70" font-size="8" font-weight="normal" fill="#fff" textLength="21.50" lengthAdjust="spacingAndGlyphs" stroke="#fff" stroke-width="0.15">Länkar</text>
<text x="787.40" y="629.40" font-size="8" font-weight="normal" fill="#fff" textLength="8.60" lengthAdjust="spacingAndGlyphs" stroke="#fff" stroke-width="0.15">SV</text>
<text x="982.00" y="626.70" font-size="7.8" font-weight="normal" fill="#fff" textLength="16.70" lengthAdjust="spacingAndGlyphs" stroke="#fff" stroke-width="0.2">21:15</text>
<text x="972.00" y="636.00" font-size="7.8" font-weight="normal" fill="#fff" textLength="36.00" lengthAdjust="spacingAndGlyphs" stroke="#fff" stroke-width="0.2">2015-06-06</text>
</svg>
</body></html>
